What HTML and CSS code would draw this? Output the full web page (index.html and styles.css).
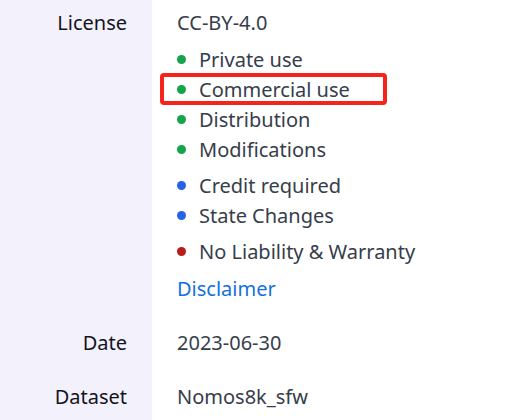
FILE: index.html
```html
<!DOCTYPE html>
<html lang="en">
<head>
<meta charset="utf-8">
<title>Model details</title>
<link rel="stylesheet" href="styles.css">
</head>
<body>
<dl class="details">
  <div class="row first">
    <dt class="label">License</dt>
    <dd class="value">
      <div class="license-name">CC-BY-4.0</div>
      <ul class="perms">
        <li class="perm green">Private use</li>
        <li class="perm green highlighted">Commercial use</li>
        <li class="perm green">Distribution</li>
        <li class="perm green">Modifications</li>
      </ul>
      <ul class="perms">
        <li class="perm blue">Credit required</li>
        <li class="perm blue">State Changes</li>
      </ul>
      <ul class="perms">
        <li class="perm red">No Liability &amp; Warranty</li>
      </ul>
      <a class="link" href="#">Disclaimer</a>
    </dd>
  </div>
  <div class="row">
    <dt class="label">Date</dt>
    <dd class="value">2023-06-30</dd>
  </div>
  <div class="row">
    <dt class="label">Dataset</dt>
    <dd class="value">Nomos8k_sfw</dd>
  </div>
</dl>
</body>
</html>
```

FILE: styles.css
```css
html, body {
  margin: 0;
  padding: 0;
  background: #ffffff;
}

body {
  font-family: "Noto Sans", "DejaVu Sans", sans-serif;
  font-size: 20px;
  line-height: 30px;
  color: #363d4b;
}

.details {
  margin: 0;
  padding: 0;
}

.row {
  display: grid;
  grid-template-columns: 152px 1fr;
}

.label {
  margin: 0;
  background: #f3f1fc;
  color: #15141d;
  text-align: right;
  padding: 12px 25px 12px 0;
}

.value {
  margin: 0;
  padding: 12px 0 12px 25px;
}

.row.first .label,
.row.first .value {
  padding-top: 8px;
}

.perms {
  list-style: none;
  margin: 7px 0 0 0;
  padding: 0;
}

.perms + .perms {
  margin-top: 6px;
}

.perm {
  position: relative;
  display: flex;
  align-items: center;
  gap: 13px;
}

.perm::before {
  content: "";
  width: 9px;
  height: 9px;
  border-radius: 50%;
  flex: none;
  position: relative;
  top: -1px;
}

.perm.green::before { background: #16a34a; }
.perm.blue::before { background: #2563eb; }
.perm.red::before { background: #b91c1c; }

.highlighted::after {
  content: "";
  position: absolute;
  left: -17px;
  top: -2px;
  width: 227px;
  height: 32px;
  box-sizing: border-box;
  border: 4px solid #f5231b;
  border-radius: 4px;
}

.link {
  display: block;
  margin-top: 7px;
  color: #1570e0;
  text-decoration: none;
}
```
